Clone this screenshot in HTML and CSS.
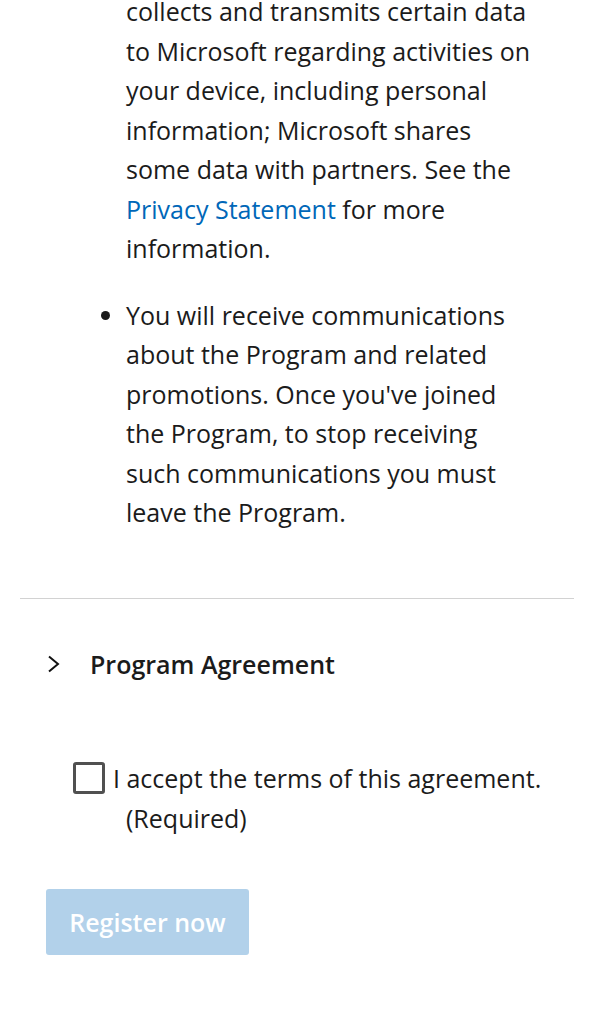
FILE: index.html
```html
<!DOCTYPE html>
<html lang="en">
<head>
<meta charset="utf-8">
<link rel="stylesheet" href="styles.css">
</head>
<body>
<main class="page">
  <ul class="terms">
    <li class="cont">collects and transmits certain data to Microsoft regarding activities on your device, including personal information; Microsoft shares some data with partners. See the <a href="#">Privacy Statement</a> for more information.</li>
    <li>You will receive communications about the Program and related promotions. Once you've joined the Program, to stop receiving such communications you must leave the Program.</li>
  </ul>
  <hr class="divider">
  <div class="accordion">
    <svg class="chevron" viewBox="0 0 14 18" width="14" height="18"><path d="M2 1.5 L11 9 L2 16.5" fill="none" stroke="#111" stroke-width="2"/></svg>
    <span class="acc-title">Program Agreement</span>
  </div>
  <label class="accept"><span class="box"></span>I accept the terms of this agreement. (Required)</label>
  <button class="register" disabled>Register now</button>
</main>
</body>
</html>
```
FILE: styles.css
```css
html, body { margin: 0; padding: 0; background: #fff; }
body { font-family: "Open Sans", "Noto Sans", sans-serif; color: #1b1b1b; overflow: hidden; }
.page { width: 594px; }
.terms { margin: -8px 0 0 0; padding: 0 0 0 126px; width: 412px; font-size: 25px; line-height: 39.5px; }
.terms li { margin-bottom: 27px; }
.terms li.cont { list-style: none; }
.terms a { color: #0067b8; text-decoration: none; }
.divider { border: 0; border-top: 1px solid #d2d2d2; margin: 65px 20px 0 20px; }
.accordion { display: flex; align-items: center; gap: 29px; margin: 44px 0 0 47px; height: 42px; }
.chevron { display: block; }
.acc-title { font-size: 25px; font-weight: 600; }
.accept { display: block; margin-top: 73px; padding-left: 126px; text-indent: -53px; font-size: 25px; line-height: 40px; }
.box { display: inline-block; width: 26px; height: 26px; border: 3px solid #505050; border-radius: 3px; vertical-align: -6px; margin-right: 8px; text-indent: 0; }
.register { display: block; margin: 51px 0 0 46px; width: 203px; height: 66px; background: #b2d1ea; border: 0; border-radius: 3px; color: #fff; font-family: inherit; font-size: 25px; font-weight: 600; padding: 0; }
```
